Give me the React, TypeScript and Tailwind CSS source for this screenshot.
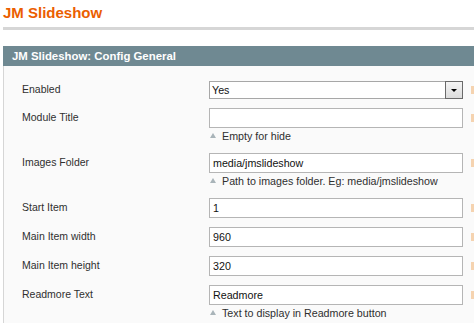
import React from "react";

function Hint({ text }: { text: string }) {
  return (
    <div className="flex items-center h-[16px]">
      <svg width="6" height="5" viewBox="0 0 6 5" className="ml-[1px] mr-[6px] -mt-[1px]">
        <polygon points="3,0 6,5 0,5" fill="#a9b4b9" />
      </svg>
      <span className="text-[10.7px] leading-[16px] text-[#2f2f2f] whitespace-nowrap">{text}</span>
    </div>
  );
}

function Marker({ top }: { top: string }) {
  return <div className={`ml-[8px] w-[4px] h-[8px] bg-[#f5d3b0] shrink-0 ${top}`} />;
}

function TextRow({ label, value, hint }: { label: string; value: string; hint?: string }) {
  return (
    <div className="flex items-start">
      <div className="w-[187px] shrink-0 text-[10.5px] leading-[20px] text-[#2f2f2f] -mt-[1px]">{label}</div>
      <div className="w-[254px] shrink-0">
        <input
          readOnly
          defaultValue={value}
          className="block w-[254px] h-[20px] border border-[#b5b5b5] bg-white pl-[3px] text-[10.7px] text-[#111] outline-none"
        />
        {hint && <Hint text={hint} />}
      </div>
      <Marker top="mt-[6px]" />
    </div>
  );
}

export default function App() {
  return (
    <div className="w-[474px] h-[323px] overflow-hidden bg-white font-['Liberation_Sans',Arial,sans-serif]">
      <h3 className="pl-[3px] pt-[4px] text-[15px] leading-[18px] font-bold text-[#eb5e00]">JM Slideshow</h3>
      <div className="ml-[3px] mt-[5px] h-[3px] bg-[#d6d6d6]" />
      <div className="ml-[3px] mt-[16px] h-[20px] bg-[#6f8992] pl-[9px] text-white font-bold text-[11.4px] leading-[20px]">
        JM Slideshow: Config General
      </div>
      <div className="ml-[3px] h-[400px] border-l border-[#d6d6d6] bg-[#fafafa] pt-[15px] pl-[18px] flex flex-col gap-[9px]">
        <div className="flex items-start">
          <div className="w-[187px] shrink-0 text-[10.5px] leading-[18px] text-[#2f2f2f] -mt-[1px]">Enabled</div>
          <div className="relative w-[254px] h-[18px] shrink-0 border border-[#a7a7a7] bg-white pl-[2px] text-[10.7px] leading-[16px] text-[#111]">
            Yes
            <div className="absolute -right-[1px] -top-[1px] w-[18px] h-[18px] border border-[#6a6a6a] bg-gradient-to-b from-[#f4f4f4] to-[#dcdcdc] flex items-center justify-center">
              <svg width="6" height="3" viewBox="0 0 6 3">
                <polygon points="0,0 6,0 3,3" fill="#000" />
              </svg>
            </div>
          </div>
          <Marker top="mt-[5px]" />
        </div>
        <TextRow label="Module Title" value="" hint="Empty for hide" />
        <TextRow label="Images Folder" value="media/jmslideshow" hint="Path to images folder. Eg: media/jmslideshow" />
        <TextRow label="Start Item" value="1" />
        <TextRow label="Main Item width" value="960" />
        <TextRow label="Main Item height" value="320" />
        <TextRow label="Readmore Text" value="Readmore" hint="Text to display in Readmore button" />
      </div>
    </div>
  );
}
